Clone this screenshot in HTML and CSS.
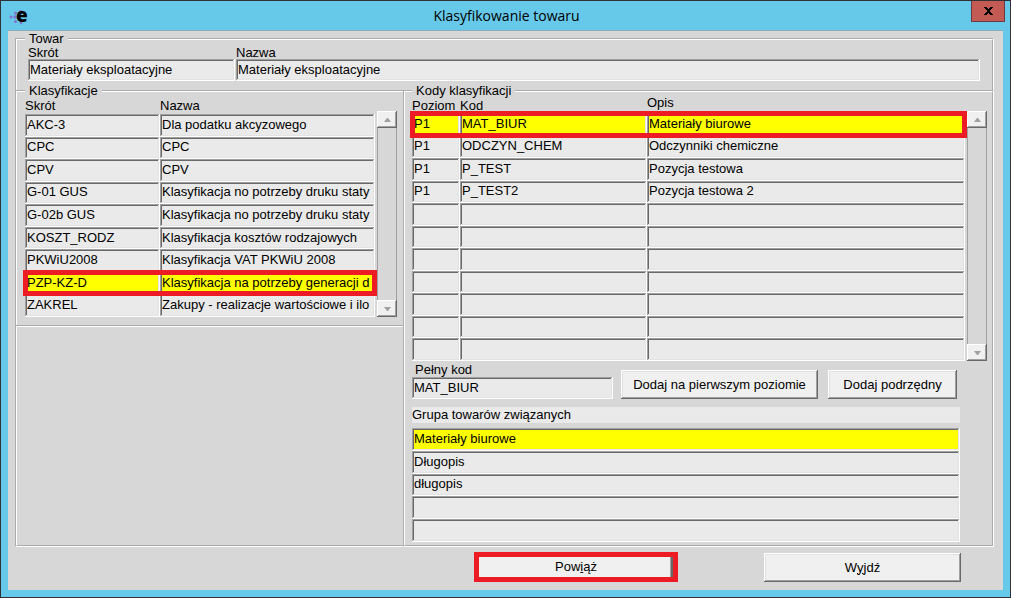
FILE: index.html
```html
<!DOCTYPE html>
<html lang="pl">
<head>
<meta charset="utf-8">
<title>Klasyfikowanie towaru</title>
<link rel="stylesheet" href="styles.css">
</head>
<body>
<div class="window">
  <header class="titlebar">
    <svg class="app-icon" width="24" height="26" viewBox="0 0 24 26" aria-hidden="true">
      <g fill="#8272cf">
        <circle cx="2" cy="14" r="1.5"/><circle cx="6.5" cy="10" r="1.5"/><circle cx="6" cy="14" r="1.8"/>
        <circle cx="6.5" cy="18.5" r="1.5"/><circle cx="11.500" cy="8.500" r="1.500"/><circle cx="12" cy="20" r="1.300"/>
      </g>
      <text class="app-letter" x="7" y="19">e</text>
    </svg>
    <h1 class="title">Klasyfikowanie towaru</h1>
    <button class="close" type="button" aria-label="Zamknij">
      <svg width="9" height="8" viewBox="0 0 9 8"><path d="M0 0H3V1H4V2H5V1H6V0H9V1H8V2H7V3H6V5H7V6H8V7H9V8H6V7H5V6H4V7H3V8H0V7H1V6H2V5H3V3H2V2H1V1H0Z" fill="#000"/></svg>
    </button>
  </header>

  <main class="content">
    <fieldset class="group product">
      <legend>Towar</legend>
      <div class="product-fields">
        <label for="short">Skrót</label>
        <label for="name">Nazwa</label>
        <input class="field" id="short" type="text" value="Materiały eksploatacyjne" readonly>
        <input class="field" id="name" type="text" value="Materiały eksploatacyjne" readonly>
      </div>
    </fieldset>

    <div class="columns">
      <div class="left">
        <fieldset class="group classes">
          <legend>Klasyfikacje</legend>
          <div class="scroll-area">
            <table class="grid classes-table">
              <colgroup><col class="col-short"><col></colgroup>
              <thead><tr><th>Skrót</th><th>Nazwa</th></tr></thead>
              <tbody>
                <tr><td>AKC-3</td><td>Dla podatku akcyzowego</td></tr>
                <tr><td>CPC</td><td>CPC</td></tr>
                <tr><td>CPV</td><td>CPV</td></tr>
                <tr><td>G-01 GUS</td><td>Klasyfikacja no potrzeby druku staty</td></tr>
                <tr><td>G-02b GUS</td><td>Klasyfikacja no potrzeby druku staty</td></tr>
                <tr><td>KOSZT_RODZ</td><td>Klasyfikacja kosztów rodzajowych</td></tr>
                <tr><td>PKWiU2008</td><td>Klasyfikacja VAT PKWiU 2008</td></tr>
                <tr class="selected marked"><td>PZP-KZ-D</td><td>Klasyfikacja na potrzeby generacji d</td></tr>
                <tr><td>ZAKREL</td><td>Zakupy - realizacje wartościowe i ilo</td></tr>
              </tbody>
            </table>
            <div class="scrollbar">
              <button type="button" aria-label="W górę"><svg width="7" height="4" viewBox="0 0 7 4"><path d="M3 0H4L7 4H0Z"/></svg></button>
              <button type="button" aria-label="W dół"><svg width="7" height="4" viewBox="0 0 7 4"><path d="M0 0H7L4 4H3Z"/></svg></button>
            </div>
          </div>
        </fieldset>
        <div class="blank"></div>
      </div>

      <fieldset class="group codes">
        <legend>Kody klasyfikacji</legend>
        <div class="scroll-area">
          <table class="grid codes-table">
            <colgroup><col class="col-level"><col class="col-code"><col></colgroup>
            <thead><tr><th>Poziom</th><th>Kod</th><th class="high">Opis</th></tr></thead>
            <tbody>
              <tr class="selected marked"><td>P1</td><td>MAT_BIUR</td><td>Materiały biurowe</td></tr>
              <tr><td>P1</td><td>ODCZYN_CHEM</td><td>Odczynniki chemiczne</td></tr>
              <tr><td>P1</td><td>P_TEST</td><td>Pozycja testowa</td></tr>
              <tr><td>P1</td><td>P_TEST2</td><td>Pozycja testowa 2</td></tr>
              <tr><td></td><td></td><td></td></tr>
              <tr><td></td><td></td><td></td></tr>
              <tr><td></td><td></td><td></td></tr>
              <tr><td></td><td></td><td></td></tr>
              <tr><td></td><td></td><td></td></tr>
              <tr><td></td><td></td><td></td></tr>
              <tr><td></td><td></td><td></td></tr>
            </tbody>
          </table>
          <div class="scrollbar">
            <button type="button" aria-label="W górę"><svg width="7" height="4" viewBox="0 0 7 4"><path d="M3 0H4L7 4H0Z"/></svg></button>
            <button type="button" aria-label="W dół"><svg width="7" height="4" viewBox="0 0 7 4"><path d="M0 0H7L4 4H3Z"/></svg></button>
          </div>
        </div>
        <div class="code-row">
          <div class="full-code">
            <label for="full">Pełny kod</label>
            <input class="field" id="full" type="text" value="MAT_BIUR" readonly>
          </div>
          <button class="button add-first" type="button">Dodaj na pierwszym poziomie</button>
          <button class="button add-child" type="button">Dodaj podrzędny</button>
        </div>
        <table class="grid related">
          <caption>Grupa towarów związanych</caption>
          <tbody>
            <tr class="selected"><td>Materiały biurowe</td></tr>
            <tr><td>Długopis</td></tr>
            <tr><td>długopis</td></tr>
            <tr><td></td></tr>
            <tr><td></td></tr>
          </tbody>
        </table>
      </fieldset>
    </div>

    <footer class="actions">
      <button class="button link-button" type="button">Pow<u>i</u>ąż</button>
      <button class="button exit-button" type="button">W<u>y</u>jdź</button>
    </footer>
  </main>
</div>
</body>
</html>
```
FILE: styles.css
```css
* {
  box-sizing: border-box;
}

body {
  margin: 0;
  font: 13px/14px "Liberation Sans", Arial, sans-serif;
  color: #000;
}

.window {
  display: flex;
  flex-direction: column;
  min-height: 100vh;
  padding: 0 7px 7px;
  border: 1px solid #2f3338;
  background: #67c9ea;
}

.titlebar {
  display: grid;
  grid-template-columns: 1fr auto 1fr;
  height: 29px;
  margin-right: -2px;
}

.app-icon {
  align-self: center;
  margin-left: 1px;
  overflow: visible;
}

.app-letter {
  font: 800 19px "Open Sans", sans-serif;
}

.title {
  margin: 0;
  font: 14px/30px "Open Sans", sans-serif;
}

.close {
  display: grid;
  place-items: center;
  justify-self: end;
  width: 34px;
  height: 21px;
  padding: 0;
  border: 1px solid #6b3b42;
  border-top: 0;
  background: #c35a53;
}

.content {
  display: flex;
  flex: 1;
  flex-direction: column;
  padding: 1px 9px 0 7px;
  border-top: 1px solid #8aaebd;
  background: #d7d7d7;
}

.group {
  min-width: 0;
  margin: 0;
  padding: 0;
}

.group legend {
  padding: 0 4px;
}

.product {
  border: 2px groove #fff;
  border-bottom: 0;
}

.product legend {
  margin-left: 8px;
}

.product-fields {
  display: grid;
  grid-template-columns: 207px 1fr;
  column-gap: 1px;
  padding: 0 12px 10px 11px;
}

.product-fields label {
  line-height: 13px;
}

.field {
  width: 100%;
  height: 22px;
  padding: 0 2px 2px;
  border: 0;
  font: inherit;
}

.field,
.grid td {
  background: #eaeaea;
  box-shadow: inset -1px -1px #fff, inset 1px 1px #a0a0a0, inset -2px -2px #e3e3e3, inset 2px 2px #696969;
}

.columns {
  display: grid;
  flex: 1;
  grid-template-columns: 388fr 591fr;
  margin-top: -7px;
}

.left {
  display: flex;
  flex-direction: column;
}

.classes {
  padding: 0 6px 8px 8px;
  border: 2px groove #fff;
  border-right: 0;
  border-bottom: 0;
}

.blank {
  flex: 1;
  border: 2px groove #fff;
  border-right: 0;
}

.codes {
  padding: 0 5px 1px 7px;
  border: 2px groove #fff;
}

.scroll-area {
  display: flex;
  gap: 2px;
}

.grid {
  width: 100%;
  border-collapse: collapse;
  table-layout: fixed;
}

.col-short {
  width: 135px;
}

.col-level {
  width: 48px;
}

.col-code {
  width: 187px;
}

.classes-table {
  height: 219px;
}

.codes-table {
  height: 263px;
}

.grid th {
  height: 15px;
  padding: 0;
  font-weight: normal;
  text-align: left;
  white-space: nowrap;
}

.classes-table th {
  height: 16px;
}

.grid th.high {
  line-height: 10px;
  vertical-align: top;
}

.grid td {
  overflow: hidden;
  height: 22px;
  padding: 0 0 1px 2px;
  white-space: nowrap;
}

.grid .selected td {
  background: #ff0;
}

.marked {
  position: relative;
}

.marked td:first-child::after {
  position: absolute;
  inset: -2px;
  border: 5px solid #ed1c24;
  content: "";
}

.scrollbar {
  display: flex;
  flex: none;
  flex-direction: column;
  justify-content: space-between;
  width: 20px;
  margin-top: 13px;
  border: 1px solid #a0a0a0;
  border-width: 0 1px;
}

.scrollbar button {
  display: grid;
  place-items: center;
  height: 17px;
  margin: 0 -1px;
  padding: 0;
  border: 0;
  background: #f0f0f0;
  box-shadow: inset -1px -1px #696969, inset 1px 1px #fff, inset -2px -2px #a0a0a0;
}

.scrollbar path {
  fill: #a0a0a0;
}

.code-row {
  display: flex;
  align-items: flex-end;
  padding-top: 2px;
}

.full-code {
  width: 201px;
  margin-right: 8px;
}

.full-code label {
  display: block;
  padding-left: 3px;
}

.button {
  height: 29px;
  padding: 0;
  border: 0;
  background: #f0f0f0;
  box-shadow: inset -1px -1px #696969, inset 1px 1px #fff, inset -2px -2px #a0a0a0, inset 2px 2px #e3e3e3;
  color: #000;
  font: inherit;
}

.add-first {
  width: 197px;
  margin-right: 10px;
}

.add-child {
  width: 129px;
}

.related {
  width: calc(100% - 27px);
  height: 114px;
  margin-top: 8px;
}

.related caption {
  height: 16px;
  margin-bottom: 5px;
  background: #eaeaea;
  line-height: 16px;
  text-align: left;
}

.actions {
  display: flex;
  gap: 86px;
  justify-content: flex-end;
  padding: 5px 33px 8px 0;
}

.link-button {
  width: 204px;
  height: 30px;
  border: 5px solid #ed1c24;
  box-shadow: inset -2px 0 #696969, inset -3px 0 #a0a0a0;
}

.exit-button {
  width: 197px;
  margin-top: 1px;
}
```
